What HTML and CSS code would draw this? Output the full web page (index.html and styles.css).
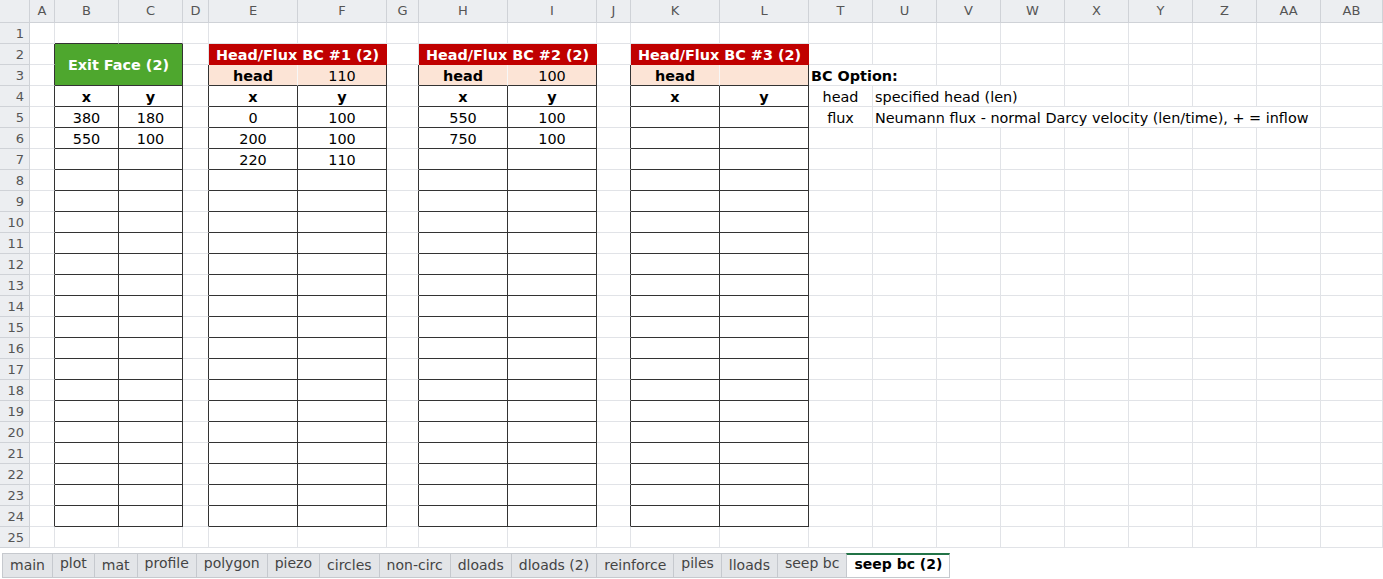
FILE: index.html
```html
<!DOCTYPE html>
<html lang="en">
<head>
    <meta charset="UTF-8">
    <meta name="viewport" content="width=device-width, initial-scale=1.0">
    <title>seep bc (2)</title>
    <link rel="stylesheet" href="styles.css">
</head>
<body>
    <div class="sheet" id="sheet"></div>

    <div class="tabs">
        <div class="tab">main</div>
        <div class="tab lift">plot</div>
        <div class="tab">mat</div>
        <div class="tab lift">profile</div>
        <div class="tab lift">polygon</div>
        <div class="tab lift">piezo</div>
        <div class="tab">circles</div>
        <div class="tab">non-circ</div>
        <div class="tab">dloads</div>
        <div class="tab">dloads (2)</div>
        <div class="tab">reinforce</div>
        <div class="tab lift">piles</div>
        <div class="tab">lloads</div>
        <div class="tab lift">seep bc</div>
        <div class="tab lift active">seep bc (2)</div>
    </div>

    <script>
        const cols = ['A', 'B', 'C', 'D', 'E', 'F', 'G', 'H', 'I', 'J', 'K', 'L',
                      'T', 'U', 'V', 'W', 'X', 'Y', 'Z', 'AA', 'AB'];
        const rowCount = 25;

        // cell contents: [text, classes, colspan, rowspan]
        const cells = {
            B2: ['Exit Face (2)', 'green', 2, 2],
            E2: ['Head/Flux BC #1 (2)', 'red', 2],
            H2: ['Head/Flux BC #2 (2)', 'red', 2],
            K2: ['Head/Flux BC #3 (2)', 'red', 2],

            E3: ['head', 'peach bold split'], F3: ['110', 'peach'],
            H3: ['head', 'peach bold split'], I3: ['100', 'peach'],
            K3: ['head', 'peach bold split'], L3: ['', 'peach'],
            T3: ['BC Option:', 'bold left', 2],

            B4: ['x', 'bold'], C4: ['y', 'bold'],
            E4: ['x', 'bold'], F4: ['y', 'bold'],
            H4: ['x', 'bold'], I4: ['y', 'bold'],
            K4: ['x', 'bold'], L4: ['y', 'bold'],
            T4: ['head', ''],
            U4: ['specified head (len)', 'left', 3],

            B5: ['380', ''], C5: ['180', ''],
            E5: ['0', ''], F5: ['100', ''],
            H5: ['550', ''], I5: ['100', ''],
            T5: ['flux', ''],
            U5: ['Neumann flux - normal Darcy velocity (len/time), + = inflow', 'left', 7],

            B6: ['550', ''], C6: ['100', ''],
            E6: ['200', ''], F6: ['100', ''],
            H6: ['750', ''], I6: ['100', ''],

            E7: ['220', ''], F7: ['110', '']
        };

        // bordered input tables: [firstCol, firstRow, lastCol, lastRow]
        const boxes = [
            ['B', 2, 'C', 24],
            ['E', 3, 'F', 24],
            ['H', 3, 'I', 24],
            ['K', 3, 'L', 24]
        ];

        const sheet = document.getElementById('sheet');
        const taken = {};
        const at = (r, c) => taken[r + ',' + c];

        const add = (cls, text) => {
            const div = document.createElement('div');
            div.className = cls;
            div.textContent = text;
            sheet.appendChild(div);
            return div;
        };

        // Header row
        add('corner', '');
        cols.forEach(c => add('colhead', c));

        // Body rows
        for (let r = 1; r <= rowCount; r++) {
            add('rowhead', r);
            cols.forEach((c, ci) => {
                if (at(r, ci)) return;
                const [text, cls, span = 1, rspan = 1] = cells[c + r] || ['', ''];
                const div = add('cell ' + cls, text);
                if (span > 1) div.style.gridColumn = 'span ' + span;
                if (rspan > 1) div.style.gridRow = 'span ' + rspan;
                for (let dr = 0; dr < rspan; dr++) {
                    for (let dc = 0; dc < span; dc++) taken[(r + dr) + ',' + (ci + dc)] = div;
                }
            });
        }

        // Dark borders round the input tables
        boxes.forEach(([c1, r1, c2, r2]) => {
            const a = cols.indexOf(c1);
            const b = cols.indexOf(c2);
            for (let r = r1; r <= r2; r++) {
                for (let ci = a; ci <= b; ci++) {
                    const div = at(r, ci);
                    div.classList.add('br', 'bb');
                    const left = at(r, ci - 1);
                    const top = at(r - 1, ci);
                    if (left && left !== div) left.classList.add('br');
                    if (top && top !== div) top.classList.add('bb');
                }
            }
        });
    </script>
</body>
</html>
```

FILE: styles.css
```css
body {
    margin: 0;
    font-family: "DejaVu Sans", "Noto Sans", sans-serif;
    background: #ffffff;
    color: #000;
    overflow: hidden;
}
.sheet {
    display: grid;
    grid-template-columns: 30px 25px 64px 64px 26px 89px 89px 32px 89px 89px 34px 89px 89px repeat(8, 64px) 62px;
    grid-template-rows: 23px repeat(25, 21px);
}
.sheet > div {
    box-sizing: border-box;
    border-right: 1px solid #e1e3e7;
    border-bottom: 1px solid #e1e3e7;
    white-space: nowrap;
    overflow: hidden;
}
.sheet .corner,
.sheet .colhead,
.sheet .rowhead {
    background: #eceef1;
    border-color: #cfd2d7;
    color: #555;
    font-size: 13px;
}
.colhead {
    text-align: center;
    line-height: 22px;
}
.rowhead {
    text-align: right;
    padding-right: 5px;
    line-height: 21px;
}
.cell {
    display: flex;
    align-items: center;
    justify-content: center;
    padding: 1px 2px 0;
    font-size: 14.4px;
}
.left {
    justify-content: flex-start;
}
.bold {
    font-weight: bold;
}
.sheet .br {
    border-right-color: #333;
}
.sheet .bb {
    border-bottom-color: #333;
}
.green {
    background: #4ea72e;
    color: #fff;
    font-weight: bold;
}
.sheet .red {
    background: #c00000;
    color: #fff;
    font-weight: bold;
    border-color: #c00000;
}
.peach {
    background: #fce4d6;
}
.sheet .split {
    border-right-color: #f7f7f7;
}
.tabs {
    display: flex;
    padding: 5px 0 0 3px;
}
.tab {
    box-sizing: border-box;
    height: 25px;
    margin-left: -1px;
    padding: 0 7px;
    border: 1px solid #c6c9ce;
    background: #e3e5e8;
    color: #444;
    font-size: 14px;
    line-height: 23px;
}
.tab.lift {
    line-height: 19px;
    padding-bottom: 4px;
}
.tab.active {
    background: #fff;
    color: #000;
    font-weight: bold;
    border-top: 2px solid #217346;
    line-height: 18px;
}
```
